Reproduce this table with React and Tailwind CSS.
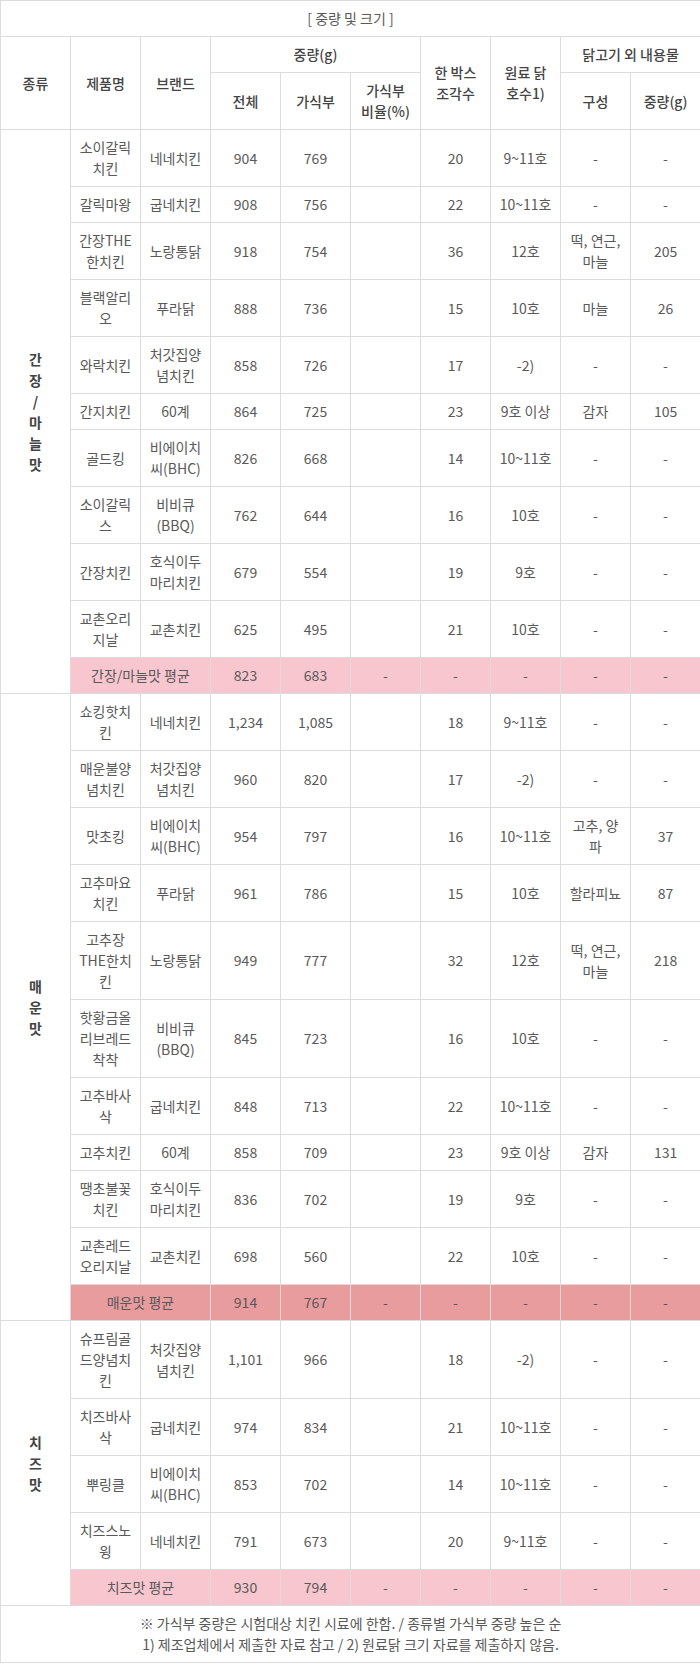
import React from 'react';

const sections = [
  {
    name: ['간', '장', '/', '마', '늘', '맛'],
    rows: [
      ['소이갈릭\n치킨', '네네치킨', '904', '769', '20', '9~11호', '-', '-'],
      ['갈릭마왕', '굽네치킨', '908', '756', '22', '10~11호', '-', '-'],
      ['간장THE\n한치킨', '노랑통닭', '918', '754', '36', '12호', '떡, 연근,\n마늘', '205'],
      ['블랙알리\n오', '푸라닭', '888', '736', '15', '10호', '마늘', '26'],
      ['와락치킨', '처갓집양\n념치킨', '858', '726', '17', '-2)', '-', '-'],
      ['간지치킨', '60계', '864', '725', '23', '9호 이상', '감자', '105'],
      ['골드킹', '비에이치\n씨(BHC)', '826', '668', '14', '10~11호', '-', '-'],
      ['소이갈릭\n스', '비비큐\n(BBQ)', '762', '644', '16', '10호', '-', '-'],
      ['간장치킨', '호식이두\n마리치킨', '679', '554', '19', '9호', '-', '-'],
      ['교촌오리\n지날', '교촌치킨', '625', '495', '21', '10호', '-', '-'],
    ],
    avg: ['간장/마늘맛 평균', '823', '683'],
    avgBg: 'bg-[#f7c6cf]',
  },
  {
    name: ['매', '운', '맛'],
    rows: [
      ['쇼킹핫치\n킨', '네네치킨', '1,234', '1,085', '18', '9~11호', '-', '-'],
      ['매운불양\n념치킨', '처갓집양\n념치킨', '960', '820', '17', '-2)', '-', '-'],
      ['맛초킹', '비에이치\n씨(BHC)', '954', '797', '16', '10~11호', '고추, 양\n파', '37'],
      ['고추마요\n치킨', '푸라닭', '961', '786', '15', '10호', '할라피뇨', '87'],
      ['고추장\nTHE한치\n킨', '노랑통닭', '949', '777', '32', '12호', '떡, 연근,\n마늘', '218'],
      ['핫황금올\n리브레드\n착착', '비비큐\n(BBQ)', '845', '723', '16', '10호', '-', '-'],
      ['고추바사\n삭', '굽네치킨', '848', '713', '22', '10~11호', '-', '-'],
      ['고추치킨', '60계', '858', '709', '23', '9호 이상', '감자', '131'],
      ['땡초불꽃\n치킨', '호식이두\n마리치킨', '836', '702', '19', '9호', '-', '-'],
      ['교촌레드\n오리지날', '교촌치킨', '698', '560', '22', '10호', '-', '-'],
    ],
    avg: ['매운맛 평균', '914', '767'],
    avgBg: 'bg-[#e89c9e]',
  },
  {
    name: ['치', '즈', '맛'],
    rows: [
      ['슈프림골\n드양념치\n킨', '처갓집양\n념치킨', '1,101', '966', '18', '-2)', '-', '-'],
      ['치즈바사\n삭', '굽네치킨', '974', '834', '21', '10~11호', '-', '-'],
      ['뿌링클', '비에이치\n씨(BHC)', '853', '702', '14', '10~11호', '-', '-'],
      ['치즈스노\n윙', '네네치킨', '791', '673', '20', '9~11호', '-', '-'],
    ],
    avg: ['치즈맛 평균', '930', '794'],
    avgBg: 'bg-[#f7c6cf]',
  },
];

const cell = 'border border-[#dcdcdc] px-[5px] py-[7px] text-center align-middle whitespace-pre-line';
const head = `${cell} font-medium text-[#444]`;

function Section({ section }) {
  const { name, rows, avg, avgBg } = section;
  return (
    <>
      {rows.map((r, i) => (
        <tr key={i}>
          {i === 0 && (
            <td rowSpan={rows.length + 1} className={`${cell} font-bold text-[#444]`}>
              {name.map((c, j) => (
                <div key={j}>{c}</div>
              ))}
            </td>
          )}
          <td className={cell}>{r[0]}</td>
          <td className={cell}>{r[1]}</td>
          <td className={cell}>{r[2]}</td>
          <td className={cell}>{r[3]}</td>
          <td className={cell}></td>
          <td className={cell}>{r[4]}</td>
          <td className={cell}>{r[5]}</td>
          <td className={cell}>{r[6]}</td>
          <td className={cell}>{r[7]}</td>
        </tr>
      ))}
      <tr className={avgBg}>
        <td colSpan={2} className={cell}>{avg[0]}</td>
        <td className={cell}>{avg[1]}</td>
        <td className={cell}>{avg[2]}</td>
        <td className={cell}>-</td>
        <td className={cell}>-</td>
        <td className={cell}>-</td>
        <td className={cell}>-</td>
        <td className={cell}>-</td>
      </tr>
    </>
  );
}

export default function App() {
  return (
    <div className="w-[700px] bg-white font-['Noto_Sans_CJK_KR','Noto_Sans',sans-serif] text-[14px] leading-[21px] text-[#595959]">
      <table className="w-full table-fixed border-collapse">
        <colgroup>
          {Array.from({ length: 10 }).map((_, i) => (
            <col key={i} className="w-[70px]" />
          ))}
        </colgroup>
        <thead>
          <tr>
            <td colSpan={10} className={cell}>[ 중량 및 크기 ]</td>
          </tr>
          <tr>
            <th rowSpan={2} className={head}>종류</th>
            <th rowSpan={2} className={head}>제품명</th>
            <th rowSpan={2} className={head}>브랜드</th>
            <th colSpan={3} className={head}>중량(g)</th>
            <th rowSpan={2} className={head}>{'한 박스\n조각수'}</th>
            <th rowSpan={2} className={head}>{'원료 닭\n호수1)'}</th>
            <th colSpan={2} className={head}>닭고기 외 내용물</th>
          </tr>
          <tr>
            <th className={head}>전체</th>
            <th className={head}>가식부</th>
            <th className={head}>{'가식부\n비율(%)'}</th>
            <th className={head}>구성</th>
            <th className={head}>중량(g)</th>
          </tr>
        </thead>
        <tbody>
          {sections.map((s, i) => (
            <Section key={i} section={s} />
          ))}
          <tr>
            <td colSpan={10} className={cell}>
              {'※ 가식부 중량은 시험대상 치킨 시료에 한함. / 종류별 가식부 중량 높은 순\n1) 제조업체에서 제출한 자료 참고 / 2) 원료닭 크기 자료를 제출하지 않음.'}
            </td>
          </tr>
        </tbody>
      </table>
    </div>
  );
}
